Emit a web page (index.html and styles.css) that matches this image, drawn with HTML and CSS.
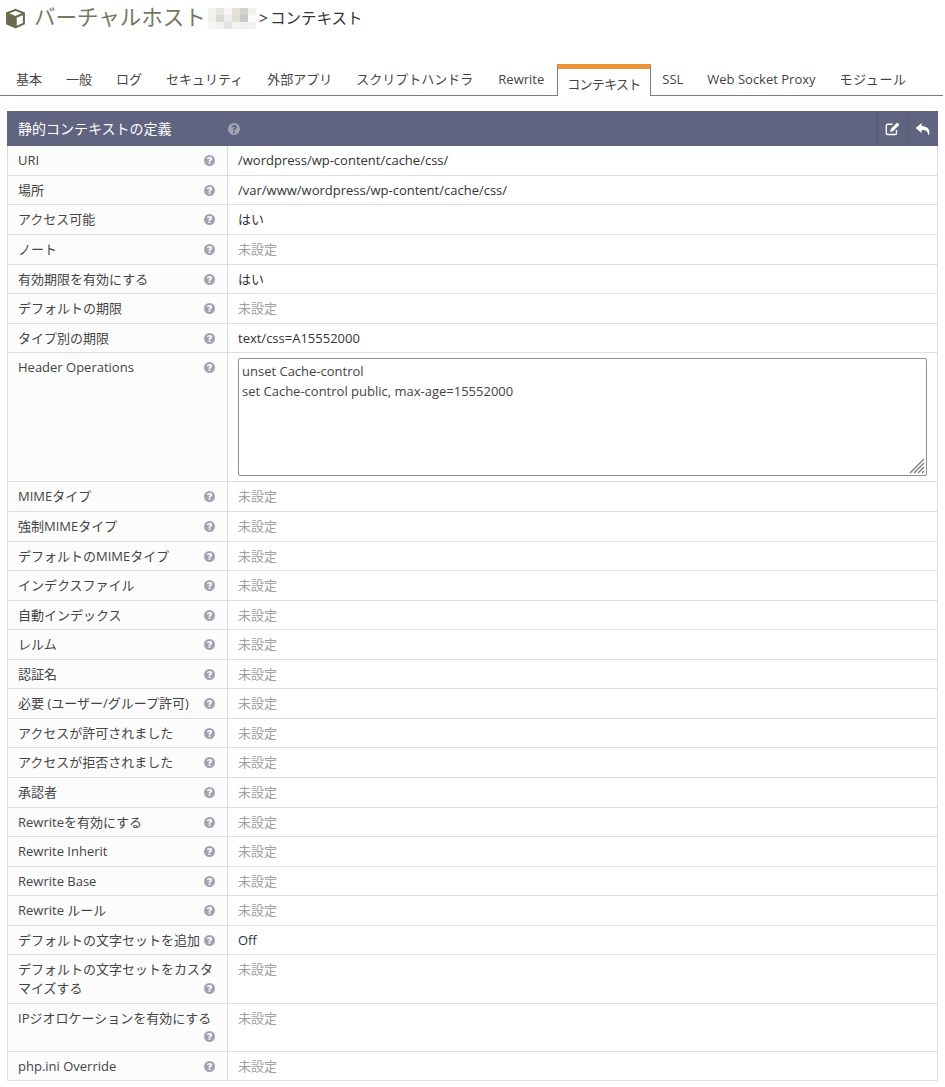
FILE: index.html
```html
<!DOCTYPE html>
<html lang="ja">
<head>
<meta charset="utf-8">
<title>コンテキスト</title>
<link rel="stylesheet" href="styles.css">
</head>
<body>
<svg class="defs" width="0" height="0" aria-hidden="true">
  <symbol id="q" viewBox="0 0 12 12">
    <path fill-rule="evenodd" d="M6 0a6 6 0 1 1 0 12A6 6 0 0 1 6 0ZM5 8.2v1.7h2V8.2ZM6 2.1c-1.5 0-2.5.8-2.8 2l1.4.7c.2-.7.6-1 1.3-1 .5 0 .9.2.9.6 0 .4-.3.6-.8.9-.6.4-1 .8-1 1.5v.5h2v-.4c0-.3.2-.4.6-.7.7-.4 1.3-1 1.3-1.9 0-1.6-1.4-2.2-2.9-2.2Z"/>
  </symbol>
</svg>
<header class="title">
  <svg class="cube" width="21" height="21" viewBox="0 0 20 20"><path d="M10 .6 19 4.4V15.400L10 19.600 1 15.400V4.400Z" fill="#6a6a4e"/><path d="M10 2.800 15.800 5.100 10 7.500 4.200 5.100Z" fill="#fff"/><path d="M11.200 9.400 17 7V14.200L11.200 16.900Z" fill="#fff"/></svg>
  <span class="vhost">バーチャルホスト</span>
  <svg class="mosaic" width="48" height="21" viewBox="0 0 48 21"><rect width="48" height="21" fill="#f1f1ef"/><rect x="8" y="0" width="8" height="7" fill="#e6e6e4"/><rect x="16" y="0" width="8" height="7" fill="#f5f5f3"/><rect x="24" y="0" width="8" height="7" fill="#e4e2da"/><rect x="32" y="0" width="8" height="7" fill="#d2d2cf"/><rect x="8" y="7" width="8" height="7" fill="#d9d9d6"/><rect x="16" y="7" width="8" height="7" fill="#ececea"/><rect x="24" y="7" width="8" height="7" fill="#e0ded6"/><rect x="32" y="7" width="8" height="7" fill="#c8c8c5"/><rect x="40" y="7" width="8" height="7" fill="#fafafa"/><rect x="0" y="14" width="8" height="7" fill="#f6f6f6"/><rect x="16" y="14" width="8" height="7" fill="#e2e2e0"/><rect x="24" y="14" width="8" height="7" fill="#f4f4f3"/><rect x="32" y="14" width="8" height="7" fill="#efefee"/></svg>
  <span class="crumb">&gt;<span class="crumb-name">コンテキスト</span></span>
</header>

<nav class="tabs">
  <a class="tab">基本</a>
  <a class="tab">一般</a>
  <a class="tab">ログ</a>
  <a class="tab">セキュリティ</a>
  <a class="tab">外部アプリ</a>
  <a class="tab">スクリプトハンドラ</a>
  <a class="tab tab-rewrite">Rewrite</a>
  <a class="tab active">コンテキスト</a>
  <a class="tab">SSL</a>
  <a class="tab">Web Socket Proxy</a>
  <a class="tab tab-last">モジュール</a>
</nav>

<section class="panel">
  <div class="panel-head">
    <h2 class="panel-title">静的コンテキストの定義</h2>
    <svg class="help help-head"><use href="#q"/></svg>
    <div class="actions">
      <span class="action"><svg width="15" height="14" viewBox="0 0 15 14"><path d="M7.5 2.3H2.6C1.9 2.3 1.3 2.9 1.3 3.6v7.6c0 .7.6 1.3 1.3 1.3h7.6c.7 0 1.3-.6 1.3-1.3V8" fill="none" stroke="#fff" stroke-width="1.4"/><path d="M12.2.6 14.4 2.8 8 9.3 5.2 10 5.8 7Z" fill="#fff"/></svg></span>
      <span class="action action-back"><svg width="16" height="14" viewBox="0 0 16 14"><path d="M6.6 1 .6 6l6 5V8c3.5-.2 5.8.6 6.6 4.6.3.4.7.4.9 0 1.4-5.400-1.800-8.400-7.500-8.600Z" fill="#fff"/></svg></span>
    </div>
  </div>
  <table class="grid">
    <tbody>
      <tr><th>URI<svg class="help"><use href="#q"/></svg></th><td>/wordpress/wp-content/cache/css/</td></tr>
      <tr><th>場所<svg class="help"><use href="#q"/></svg></th><td>/var/www/wordpress/wp-content/cache/css/</td></tr>
      <tr><th>アクセス可能<svg class="help"><use href="#q"/></svg></th><td>はい</td></tr>
      <tr><th>ノート<svg class="help"><use href="#q"/></svg></th><td class="unset">未設定</td></tr>
      <tr><th>有効期限を有効にする<svg class="help"><use href="#q"/></svg></th><td>はい</td></tr>
      <tr><th>デフォルトの期限<svg class="help"><use href="#q"/></svg></th><td class="unset">未設定</td></tr>
      <tr><th>タイプ別の期限<svg class="help"><use href="#q"/></svg></th><td>text/css=A15552000</td></tr>
      <tr><th>Header Operations<svg class="help"><use href="#q"/></svg></th><td><div class="area">unset Cache-control
set Cache-control public, max-age=15552000<svg class="grip" width="16" height="16" viewBox="0 0 16 16"><path d="M1 15 15 1M5 15 15 5M9 15 15 9M13 15 15 13" stroke="#777" stroke-width="1.200" fill="none"/></svg></div></td></tr>
      <tr><th>MIMEタイプ<svg class="help"><use href="#q"/></svg></th><td class="unset">未設定</td></tr>
      <tr><th>強制MIMEタイプ<svg class="help"><use href="#q"/></svg></th><td class="unset">未設定</td></tr>
      <tr><th>デフォルトのMIMEタイプ<svg class="help"><use href="#q"/></svg></th><td class="unset">未設定</td></tr>
      <tr><th>インデクスファイル<svg class="help"><use href="#q"/></svg></th><td class="unset">未設定</td></tr>
      <tr><th>自動インデックス<svg class="help"><use href="#q"/></svg></th><td class="unset">未設定</td></tr>
      <tr><th>レルム<svg class="help"><use href="#q"/></svg></th><td class="unset">未設定</td></tr>
      <tr><th>認証名<svg class="help"><use href="#q"/></svg></th><td class="unset">未設定</td></tr>
      <tr><th>必要 (ユーザー/グループ許可)<svg class="help"><use href="#q"/></svg></th><td class="unset">未設定</td></tr>
      <tr><th>アクセスが許可されました<svg class="help"><use href="#q"/></svg></th><td class="unset">未設定</td></tr>
      <tr><th>アクセスが拒否されました<svg class="help"><use href="#q"/></svg></th><td class="unset">未設定</td></tr>
      <tr><th>承認者<svg class="help"><use href="#q"/></svg></th><td class="unset">未設定</td></tr>
      <tr><th>Rewriteを有効にする<svg class="help"><use href="#q"/></svg></th><td class="unset">未設定</td></tr>
      <tr><th>Rewrite Inherit<svg class="help"><use href="#q"/></svg></th><td class="unset">未設定</td></tr>
      <tr><th>Rewrite Base<svg class="help"><use href="#q"/></svg></th><td class="unset">未設定</td></tr>
      <tr><th>Rewrite ルール<svg class="help"><use href="#q"/></svg></th><td class="unset">未設定</td></tr>
      <tr><th>デフォルトの文字セットを追加<svg class="help"><use href="#q"/></svg></th><td>Off</td></tr>
      <tr><th>デフォルトの文字セットをカスタマイズする<svg class="help"><use href="#q"/></svg></th><td class="unset">未設定</td></tr>
      <tr><th>IPジオロケーションを有効にする<svg class="help"><use href="#q"/></svg></th><td class="unset">未設定</td></tr>
      <tr><th>php.ini Override<svg class="help"><use href="#q"/></svg></th><td class="unset">未設定</td></tr>
    </tbody>
  </table>
</section>
</body>
</html>
```
FILE: styles.css
```css
* { box-sizing: border-box; }
html, body { margin: 0; padding: 0; background: #fff; }
body {
  font-family: "Open Sans", "Noto Sans CJK JP", sans-serif;
  font-size: 13px;
  line-height: 1.42857;
  color: #333;
  width: 945px;
  height: 1087px;
  overflow: hidden;
}
.defs { position: absolute; }

.title {
  display: flex;
  align-items: center;
  height: 36px;
  padding-left: 5px;
  color: #6b6b55;
}
.cube { flex: none; margin-right: 8px; }
.vhost {
  flex: none;
  width: 174px;
  margin-bottom: 3px;
  font-size: 21.5px;
  line-height: 30px;
  white-space: nowrap;
  color: #77775f;
}
.mosaic { flex: none; margin-right: 3px; }
.crumb { font-size: 15.5px; color: #333; white-space: nowrap; }
.crumb-name { margin-left: 2px; }

.tabs {
  display: flex;
  align-items: flex-end;
  height: 60px;
  padding-left: 4px;
  margin-right: 2px;
  border-bottom: 1px solid #7b7b8b;
}
.tab {
  display: block;
  padding: 0 12px 6px;
  line-height: 19px;
  color: #444;
  white-space: nowrap;
}
.tab-rewrite { margin-left: 1px; }
.tab-last { letter-spacing: .6px; }
.tab.active {
  width: 94px;
  height: 32px;
  margin: 0 -1px -1px 1px;
  padding: 6px 0 0 9px;
  letter-spacing: -.7px;
  background: #fff;
  border: 1px solid #7b7b8b;
  border-top: 5px solid #ea9438;
  border-bottom: 0;
}

.panel { margin: 15px 7px 0; width: 931px; }
.panel-head {
  display: flex;
  align-items: center;
  height: 35.3px;
  background: #5f6580;
  color: #fff;
}
.panel-title {
  margin: 0;
  width: 221px;
  padding-left: 11px;
  font-size: 14px;
  font-weight: 400;
}
.help {
  float: right;
  width: 11px;
  height: 11px;
  margin: 4px 0 3.5px;
  fill: #a0a3af;
}
.help-head { float: none; margin: 0; width: 12px; height: 12px; fill: #a3a6b5; }
.actions { display: flex; margin-left: auto; height: 100%; }
.action {
  display: flex;
  width: 30px;
  align-items: center;
  justify-content: center;
  border-left: 1px solid #555a73;
}
.action-back { width: 31px; }

.grid {
  width: 100%;
  border-collapse: collapse;
  table-layout: fixed;
}
.grid th, .grid td {
  padding: 5px 10px;
  border: 1px solid #ddd;
  vertical-align: top;
  text-align: left;
  font-weight: 400;
}
.grid tr:first-child th, .grid tr:first-child td { border-top: 0; }
.grid th { width: 220px; background: #fcfcfc; color: #444; padding-right: 12px; }
.grid td { color: #333; }
.grid td.unset { color: #a0a0a0; }
.area {
  position: relative;
  height: 118.2px;
  padding: 3px 3px;
  border: 1px solid #8e8e9a;
  border-radius: 2px;
  white-space: pre-wrap;
  line-height: 19.5px;
  color: #444;
}
.grip { position: absolute; right: 1px; bottom: 1px; }
```
